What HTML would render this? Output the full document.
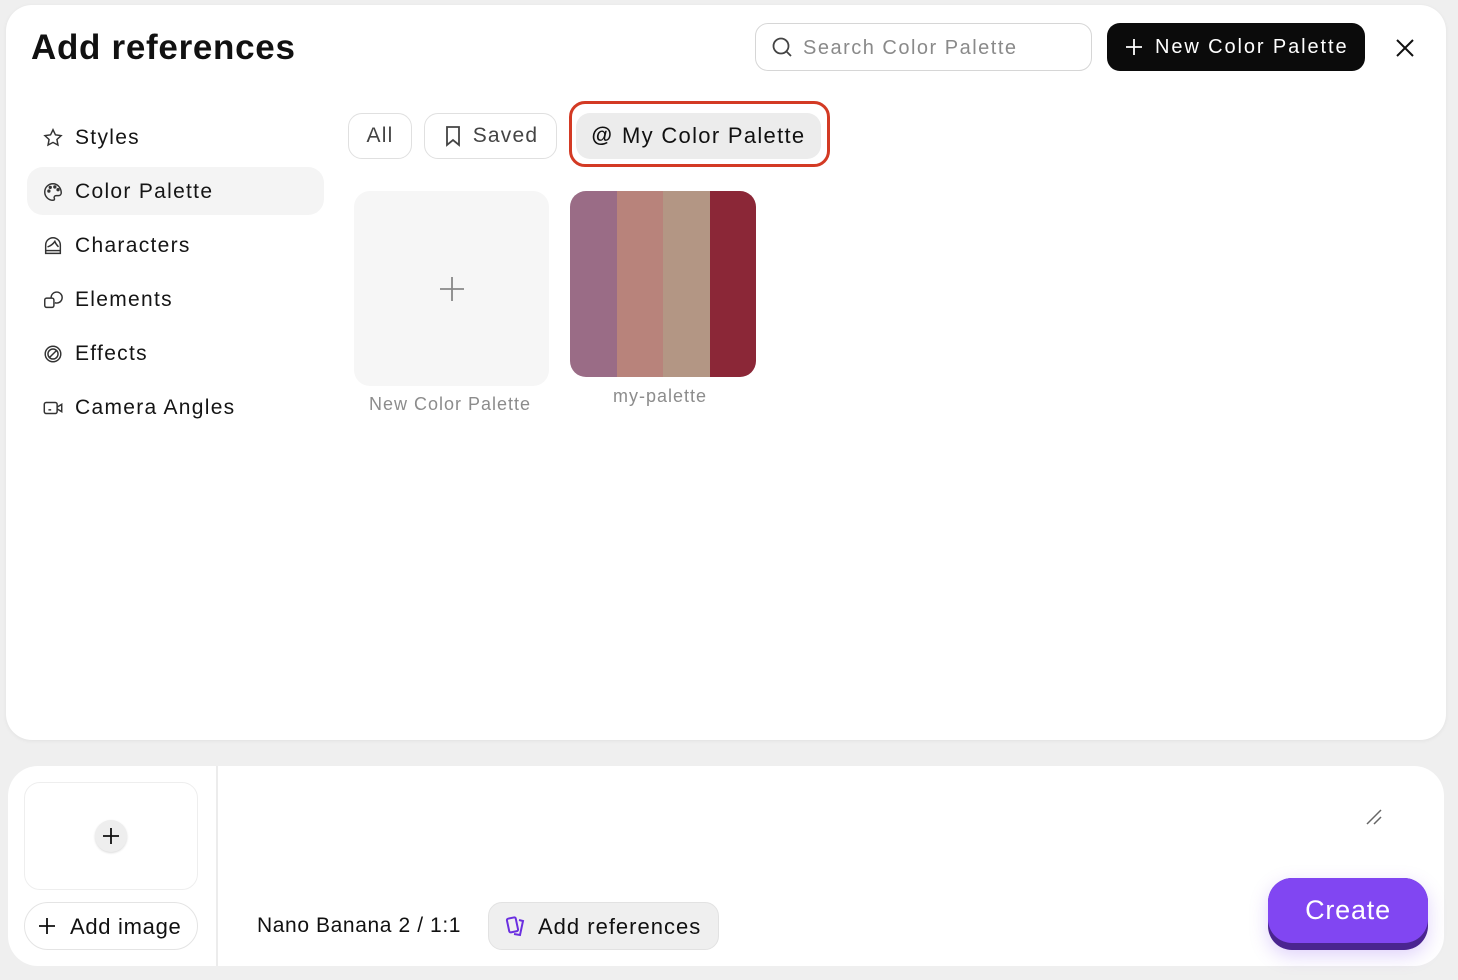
<!DOCTYPE html>
<html><head><meta charset="utf-8"><style>
*{box-sizing:border-box;margin:0;padding:0}
body{width:1458px;height:980px;background:#efefef;font-family:"Liberation Sans",sans-serif;position:relative;overflow:hidden;color:#111}
.modal{position:absolute;left:6px;top:5px;width:1440px;height:735px;background:#fff;border-radius:26px;box-shadow:0 1px 4px rgba(0,0,0,.06)}
.a{position:absolute}
h1{position:absolute;left:25px;top:23px;font-size:35px;font-weight:bold;letter-spacing:0.7px;color:#111}
.search{left:749px;top:18px;width:337px;height:48px;border:1.5px solid #d6d6d6;border-radius:13px;font-size:20px;color:#8a8a8a;padding:13px 0 0 47px;letter-spacing:1.5px}
.newbtn{left:1101px;top:18px;width:258px;height:48px;background:#0b0b0b;border-radius:13px;color:#fff;font-size:20px;padding:13px 0 0 48px;letter-spacing:1.9px}
.nav{left:36px;font-size:21px;color:#151515;display:flex;align-items:center;gap:11px;letter-spacing:1.3px}
.nav svg{width:22px;height:22px}
.sel{left:21px;top:162px;width:297px;height:48px;background:#f4f4f4;border-radius:16px}
.chip{height:46px;border:1.5px solid #e0e0e0;border-radius:14px;font-size:21px;color:#444;display:flex;align-items:center;justify-content:center;gap:10px;top:108px;letter-spacing:1.2px}
.card{left:348px;top:186px;width:195px;height:195px;background:#f6f6f6;border-radius:16px}
.lbl{font-size:18px;color:#8c8c8c;letter-spacing:1px}
.bottom{position:absolute;left:8px;top:766px;width:1436px;height:200px;background:#fff;border-radius:30px}
</style></head><body>
<div class="modal">
<h1>Add references</h1>
<div class="a search">Search Color Palette</div>
<svg class="a" style="left:765px;top:31px" width="22" height="22" viewBox="0 0 22 22" fill="none" stroke="#444" stroke-width="1.8"><circle cx="10" cy="10" r="7.5"/><path d="M15.5 15.5 20 20"/></svg>
<div class="a newbtn">New Color Palette</div>
<svg class="a" style="left:1119px;top:33px" width="18" height="18" viewBox="0 0 18 18" stroke="#fff" stroke-width="1.8"><path d="M9 1v16M1 9h16"/></svg>
<svg class="a" style="left:1389px;top:33px" width="20" height="20" viewBox="0 0 20 20" stroke="#111" stroke-width="2"><path d="M2 2l16 16M18 2 2 18"/></svg>

<div class="a sel"></div>
<div class="a nav" style="top:121px"><svg viewBox="0 0 24 24" fill="none" stroke="#333" stroke-width="1.6"><path d="M12 3l2.7 5.6 6.1.8-4.5 4.2 1.1 6.1L12 16.8 6.6 19.7l1.1-6.1-4.5-4.2 6.1-.8z"/></svg>Styles</div>
<div class="a nav" style="top:175px"><svg viewBox="0 0 24 24" fill="none" stroke="#333" stroke-width="1.6"><path d="M12 3a9 9 0 1 0 0 18c1.5 0 2-1 1.5-2-.8-1.6.2-3 2-3H18a3 3 0 0 0 3-3c0-5.5-4-10-9-10z"/><circle cx="7.5" cy="11" r="1" fill="#333"/><circle cx="9" cy="7" r="1" fill="#333"/><circle cx="14" cy="6.5" r="1" fill="#333"/><circle cx="17.5" cy="9.5" r="1" fill="#333"/></svg>Color Palette</div>
<div class="a nav" style="top:229px"><svg viewBox="0 0 24 24" fill="none" stroke="#333" stroke-width="1.6"><path d="M4 20V11a8 8 0 0 1 16 0v9z"/><path d="M6 13c3-1 6-3 8-6 1 3 3 5 4 6"/><path d="M4 17h16"/></svg>Characters</div>
<div class="a nav" style="top:283px"><svg viewBox="0 0 24 24" fill="none" stroke="#333" stroke-width="1.6"><rect x="3" y="10" width="10" height="10" rx="2"/><path d="M10 10a6 6 0 1 1 4 5"/></svg>Elements</div>
<div class="a nav" style="top:337px"><svg viewBox="0 0 24 24" fill="none" stroke="#333" stroke-width="1.6"><circle cx="12" cy="12" r="8.5"/><circle cx="12" cy="12" r="5.5"/><path d="M8 16l8-8"/></svg>Effects</div>
<div class="a nav" style="top:391px"><svg viewBox="0 0 24 24" fill="none" stroke="#333" stroke-width="1.6"><rect x="2.5" y="6" width="14" height="12" rx="2"/><path d="M16.5 11l5-3v8l-5-3"/><path d="M7 14h3"/></svg>Camera Angles</div>

<div class="a chip" style="left:342px;width:64px">All</div>
<div class="a chip" style="left:418px;width:133px"><svg width="20" height="22" viewBox="0 0 20 22" fill="none" stroke="#444" stroke-width="1.8"><path d="M4 2h12v18l-6-5-6 5z"/></svg>Saved</div>
<div class="a" style="left:563px;top:96px;width:261px;height:66px;border:3.5px solid #d33a24;border-radius:16px"></div>
<div class="a chip" style="left:570px;top:108px;width:245px;background:#ececec;border:none;color:#111;font-size:22px;gap:10px;letter-spacing:1.3px"><span style="font-weight:bold;font-size:21px;letter-spacing:0">@</span>My Color Palette</div>

<div class="a card"></div>
<svg class="a" style="left:433px;top:271px" width="26" height="26" viewBox="0 0 26 26" stroke="#888" stroke-width="1.8"><path d="M13 1v24M1 13h24"/></svg>
<div class="a lbl" style="left:363px;top:389px">New Color Palette</div>
<div class="a" style="left:564px;top:186px;width:186px;height:186px;border-radius:16px;overflow:hidden;display:flex"><div style="flex:1;background:#9a6c86"></div><div style="flex:1;background:#b8837b"></div><div style="flex:1;background:#b39684"></div><div style="flex:1;background:#8b2737"></div></div>
<div class="a lbl" style="left:607px;top:381px">my-palette</div>
</div>

<div class="bottom">
<div class="a" style="left:208px;top:0;width:1.5px;height:200px;background:#ececec"></div>
<div class="a" style="left:16px;top:16px;width:174px;height:108px;border:1.5px solid #eee;border-radius:16px"></div>
<div class="a" style="left:87px;top:54px;width:32px;height:32px;border-radius:50%;background:#eee;box-shadow:0 1px 2px rgba(0,0,0,.15)"></div>
<svg class="a" style="left:94px;top:61px" width="18" height="18" viewBox="0 0 18 18" stroke="#111" stroke-width="1.8"><path d="M9 1v16M1 9h16"/></svg>
<div class="a" style="left:16px;top:136px;width:174px;height:48px;border:1.5px solid #e4e4e4;border-radius:24px;font-size:22px;padding:11px 0 0 45px;letter-spacing:0.7px">Add image</div>
<svg class="a" style="left:30px;top:151px" width="18" height="18" viewBox="0 0 18 18" stroke="#111" stroke-width="1.8"><path d="M9 1v16M1 9h16"/></svg>
<div class="a" style="left:249px;top:148px;font-size:21px;letter-spacing:0.6px">Nano Banana 2 / 1:1</div>
<div class="a" style="left:480px;top:136px;width:231px;height:48px;background:#efefef;border:1.5px solid #e2e2e2;border-radius:14px;font-size:22px;padding:11px 0 0 49px;letter-spacing:1px">Add references</div>
<svg class="a" style="left:497px;top:149px" width="22" height="22" viewBox="0 0 22 22" fill="none" stroke="#6b2fe0" stroke-width="2"><rect x="3" y="3" width="9" height="14" rx="1.5" transform="rotate(-12 7 10)"/><path d="M14 5l4 1-3 14-6-1"/></svg>
<svg class="a" style="left:1357px;top:42px" width="18" height="18" viewBox="0 0 18 18" stroke="#666" stroke-width="1.5"><path d="M2 16 16 2M9 16l7-7"/></svg>
<div class="a" style="left:1260px;top:112px;width:160px;height:72px;border-radius:24px;background:#4a2590;box-shadow:0 6px 18px rgba(130,80,240,.25)"></div>
<div class="a" style="left:1260px;top:112px;width:160px;height:65px;border-radius:24px;background:#8146f2;color:#fff;font-size:27px;text-align:center;padding-top:17px;letter-spacing:0.8px">Create</div>
</div>
</body></html>
